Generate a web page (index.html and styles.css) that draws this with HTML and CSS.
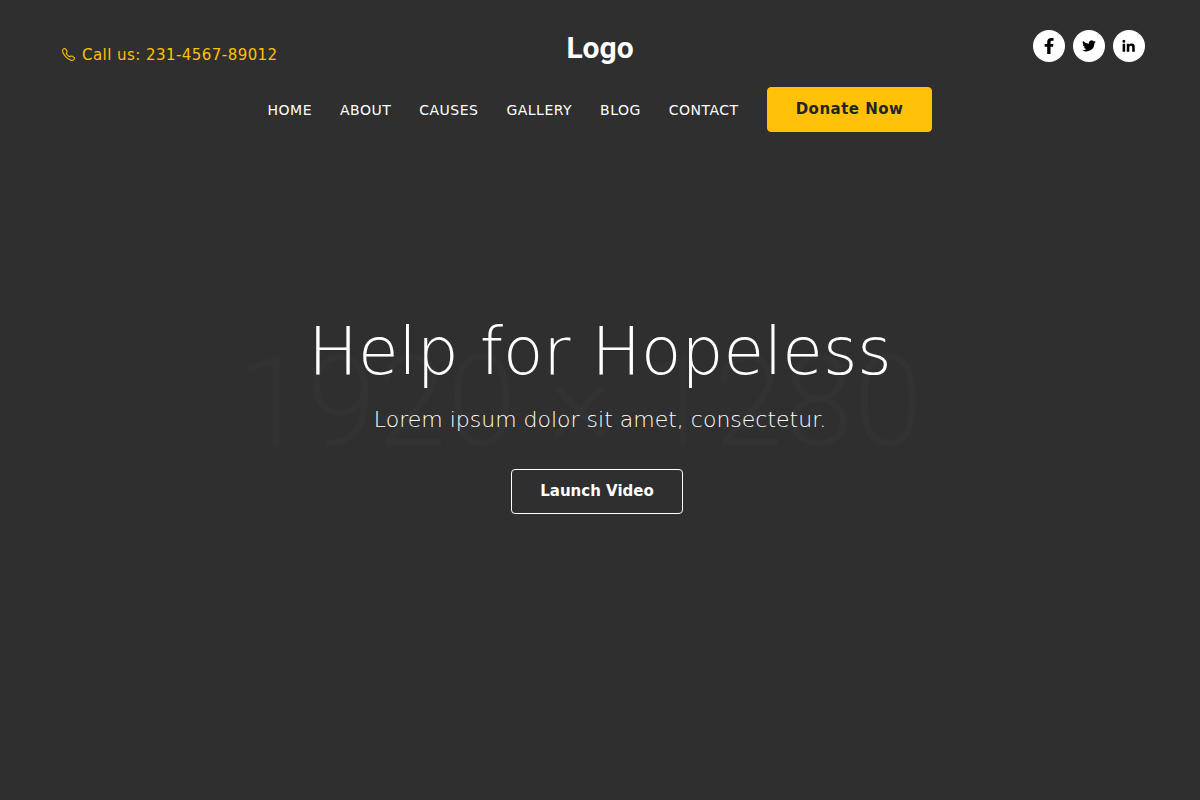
FILE: index.html
```html
<!DOCTYPE html>
<html lang="en">
<head>
<meta charset="utf-8">
<meta name="viewport" content="width=device-width, initial-scale=1">
<title>Help for Hopeless</title>
<link rel="stylesheet" href="styles.css">
</head>
<body>
<div class="page">
  <div class="backdrop" aria-hidden="true">1920 × 1280</div>
  <header class="header">
    <div class="topbar">
      <a class="phone" href="tel:231456789012">
        <svg class="phone-icon" viewBox="0 0 16 16" fill="currentColor" stroke="currentColor" stroke-width=".4"><path d="M3.654 1.328a.678.678 0 0 0-1.015-.063L1.605 2.3c-.483.484-.661 1.169-.45 1.77a17.6 17.6 0 0 0 4.168 6.608 17.6 17.6 0 0 0 6.608 4.168c.601.211 1.286.033 1.77-.45l1.034-1.034a.678.678 0 0 0-.063-1.015l-2.307-1.794a.68.68 0 0 0-.58-.122l-2.19.547a1.75 1.75 0 0 1-1.657-.459L5.482 8.062a1.75 1.75 0 0 1-.46-1.657l.548-2.19a.68.68 0 0 0-.122-.58zM1.884.511a1.745 1.745 0 0 1 2.612.163L6.29 2.98c.329.423.445.974.315 1.494l-.547 2.19a.68.68 0 0 0 .178.643l2.457 2.457a.68.68 0 0 0 .644.178l2.189-.547a1.75 1.75 0 0 1 1.494.315l2.306 1.794c.829.645.905 1.87.163 2.611l-1.034 1.034c-.74.74-1.846 1.065-2.877.702a18.6 18.6 0 0 1-7.01-4.42 18.6 18.6 0 0 1-4.42-7.009c-.362-1.03-.037-2.137.703-2.877z"/></svg>
        <span>Call us: 231-4567-89012</span>
      </a>
      <a class="logo" href="#">Logo</a>
      <div class="social">
        <a class="social-link" href="#" aria-label="Facebook"><svg viewBox="1.3 1.35 20.65 20.65"><path d="M13.6 22v-9.2h3.200l.5-3.800h-3.700V6.700c0-1.100.4-1.800 1.900-1.800h2V1.500C17 1.450 15.800 1.350 14.500 1.350c-3 0-5.200 1.800-5.200 5V9H6v3.800h3.300V22z"/></svg></a>
        <a class="social-link" href="#" aria-label="Twitter"><svg viewBox="-1 -1 26 26"><path d="M23 5.100a9 9 0 0 1-2.600.7 4.500 4.500 0 0 0 2-2.500 9 9 0 0 1-2.900 1.100 4.500 4.500 0 0 0-7.700 4.100A12.800 12.800 0 0 1 2.500 3.800a4.500 4.500 0 0 0 1.400 6 4.500 4.500 0 0 1-2-.6v.1a4.500 4.500 0 0 0 3.600 4.400 4.500 4.500 0 0 1-2 .1 4.500 4.500 0 0 0 4.200 3.100A9 9 0 0 1 1 18.800a12.800 12.800 0 0 0 19.700-11.400A9 9 0 0 0 23 5.100z"/></svg></a>
        <a class="social-link" href="#" aria-label="LinkedIn"><svg viewBox="0 0 25 24"><path d="M2.500 8.500h4V21h-4zM4.500 2.300a2.300 2.300 0 1 1 0 4.700 2.300 2.300 0 0 1 0-4.700zM9 8.500h3.800v1.700c.7-1.200 2-2 3.900-2 4 0 4.800 2.600 4.800 6V21h-4v-6c0-1.500 0-3.400-2.100-3.400S13 13.200 13 14.900V21H9z"/></svg></a>
      </div>
    </div>
    <nav class="nav">
      <a class="nav-link" href="#">HOME</a>
      <a class="nav-link" href="#">ABOUT</a>
      <a class="nav-link" href="#">CAUSES</a>
      <a class="nav-link" href="#">GALLERY</a>
      <a class="nav-link" href="#">BLOG</a>
      <a class="nav-link" href="#">CONTACT</a>
      <a class="button button-donate" href="#">Donate Now</a>
    </nav>
  </header>
  <main class="hero">
    <h1 class="title">Help for Hopeless</h1>
    <p class="lead">Lorem ipsum dolor sit amet, consectetur.</p>
    <button class="button button-video" type="button">Launch Video</button>
  </main>
</div>
</body>
</html>
```
FILE: styles.css
```css
* { box-sizing: border-box; }
body {
  margin: 0;
  background: #2f2f2f;
  color: #fff;
  font-family: "DejaVu Sans", sans-serif;
  font-size: 15px;
}
a { color: inherit; text-decoration: none; }
.page {
  position: relative;
  min-height: 100vh;
  display: flex;
  flex-direction: column;
  overflow: hidden;
}
.backdrop {
  position: absolute;
  inset: 4px 40px 0 0;
  display: flex;
  align-items: center;
  justify-content: center;
  color: #323232;
  font-family: Roboto, sans-serif;
  font-size: 126px;
  font-weight: 300;
  line-height: 1;
  white-space: nowrap;
}
.header { position: relative; padding: 30px 55px 0; }
.topbar {
  display: grid;
  grid-template-columns: 1fr auto 1fr;
  align-items: start;
}
.phone {
  display: flex;
  align-items: center;
  gap: 7px;
  padding: 16px 0 0 7px;
  color: #ffc107;
  line-height: 18px;
  letter-spacing: 0.03em;
}
.phone-icon { width: 13px; height: 13px; margin-bottom: 2px; }
.logo {
  font-family: Roboto, sans-serif;
  font-size: 30px;
  font-weight: 700;
  line-height: 36px;
}
.social { display: flex; justify-content: flex-end; gap: 8px; }
.social-link {
  display: grid;
  place-items: center;
  width: 32px;
  height: 32px;
  border-radius: 50%;
  background: #fff;
  color: #000;
}
.social-link svg { width: 16px; height: 16px; fill: currentColor; }
.nav {
  display: flex;
  justify-content: center;
  align-items: center;
  gap: 28px;
  margin-top: 21px;
  font-size: 14px;
  letter-spacing: 0.035em;
}
.button {
  padding: 0 28px;
  border: 1px solid;
  border-radius: 4px;
  font-family: "DejaVu Sans", sans-serif;
  font-size: 15px;
  font-weight: 700;
  line-height: 43px;
}
.button-donate { border-color: #ffc107; background: #ffc107; color: #212529; }
.button-video {
  margin-right: 6px;
  border-color: #fff;
  background: transparent;
  color: #fff;
  cursor: pointer;
}
.hero {
  position: relative;
  flex: 1;
  display: flex;
  flex-direction: column;
  align-items: center;
  padding-top: 180px;
  text-align: center;
}
.title {
  margin: 0;
  font-size: 66px;
  font-weight: 200;
  line-height: 80px;
}
.lead {
  margin: 12px 0 33px;
  font-size: 22px;
  font-weight: 200;
  line-height: 32px;
}
```
